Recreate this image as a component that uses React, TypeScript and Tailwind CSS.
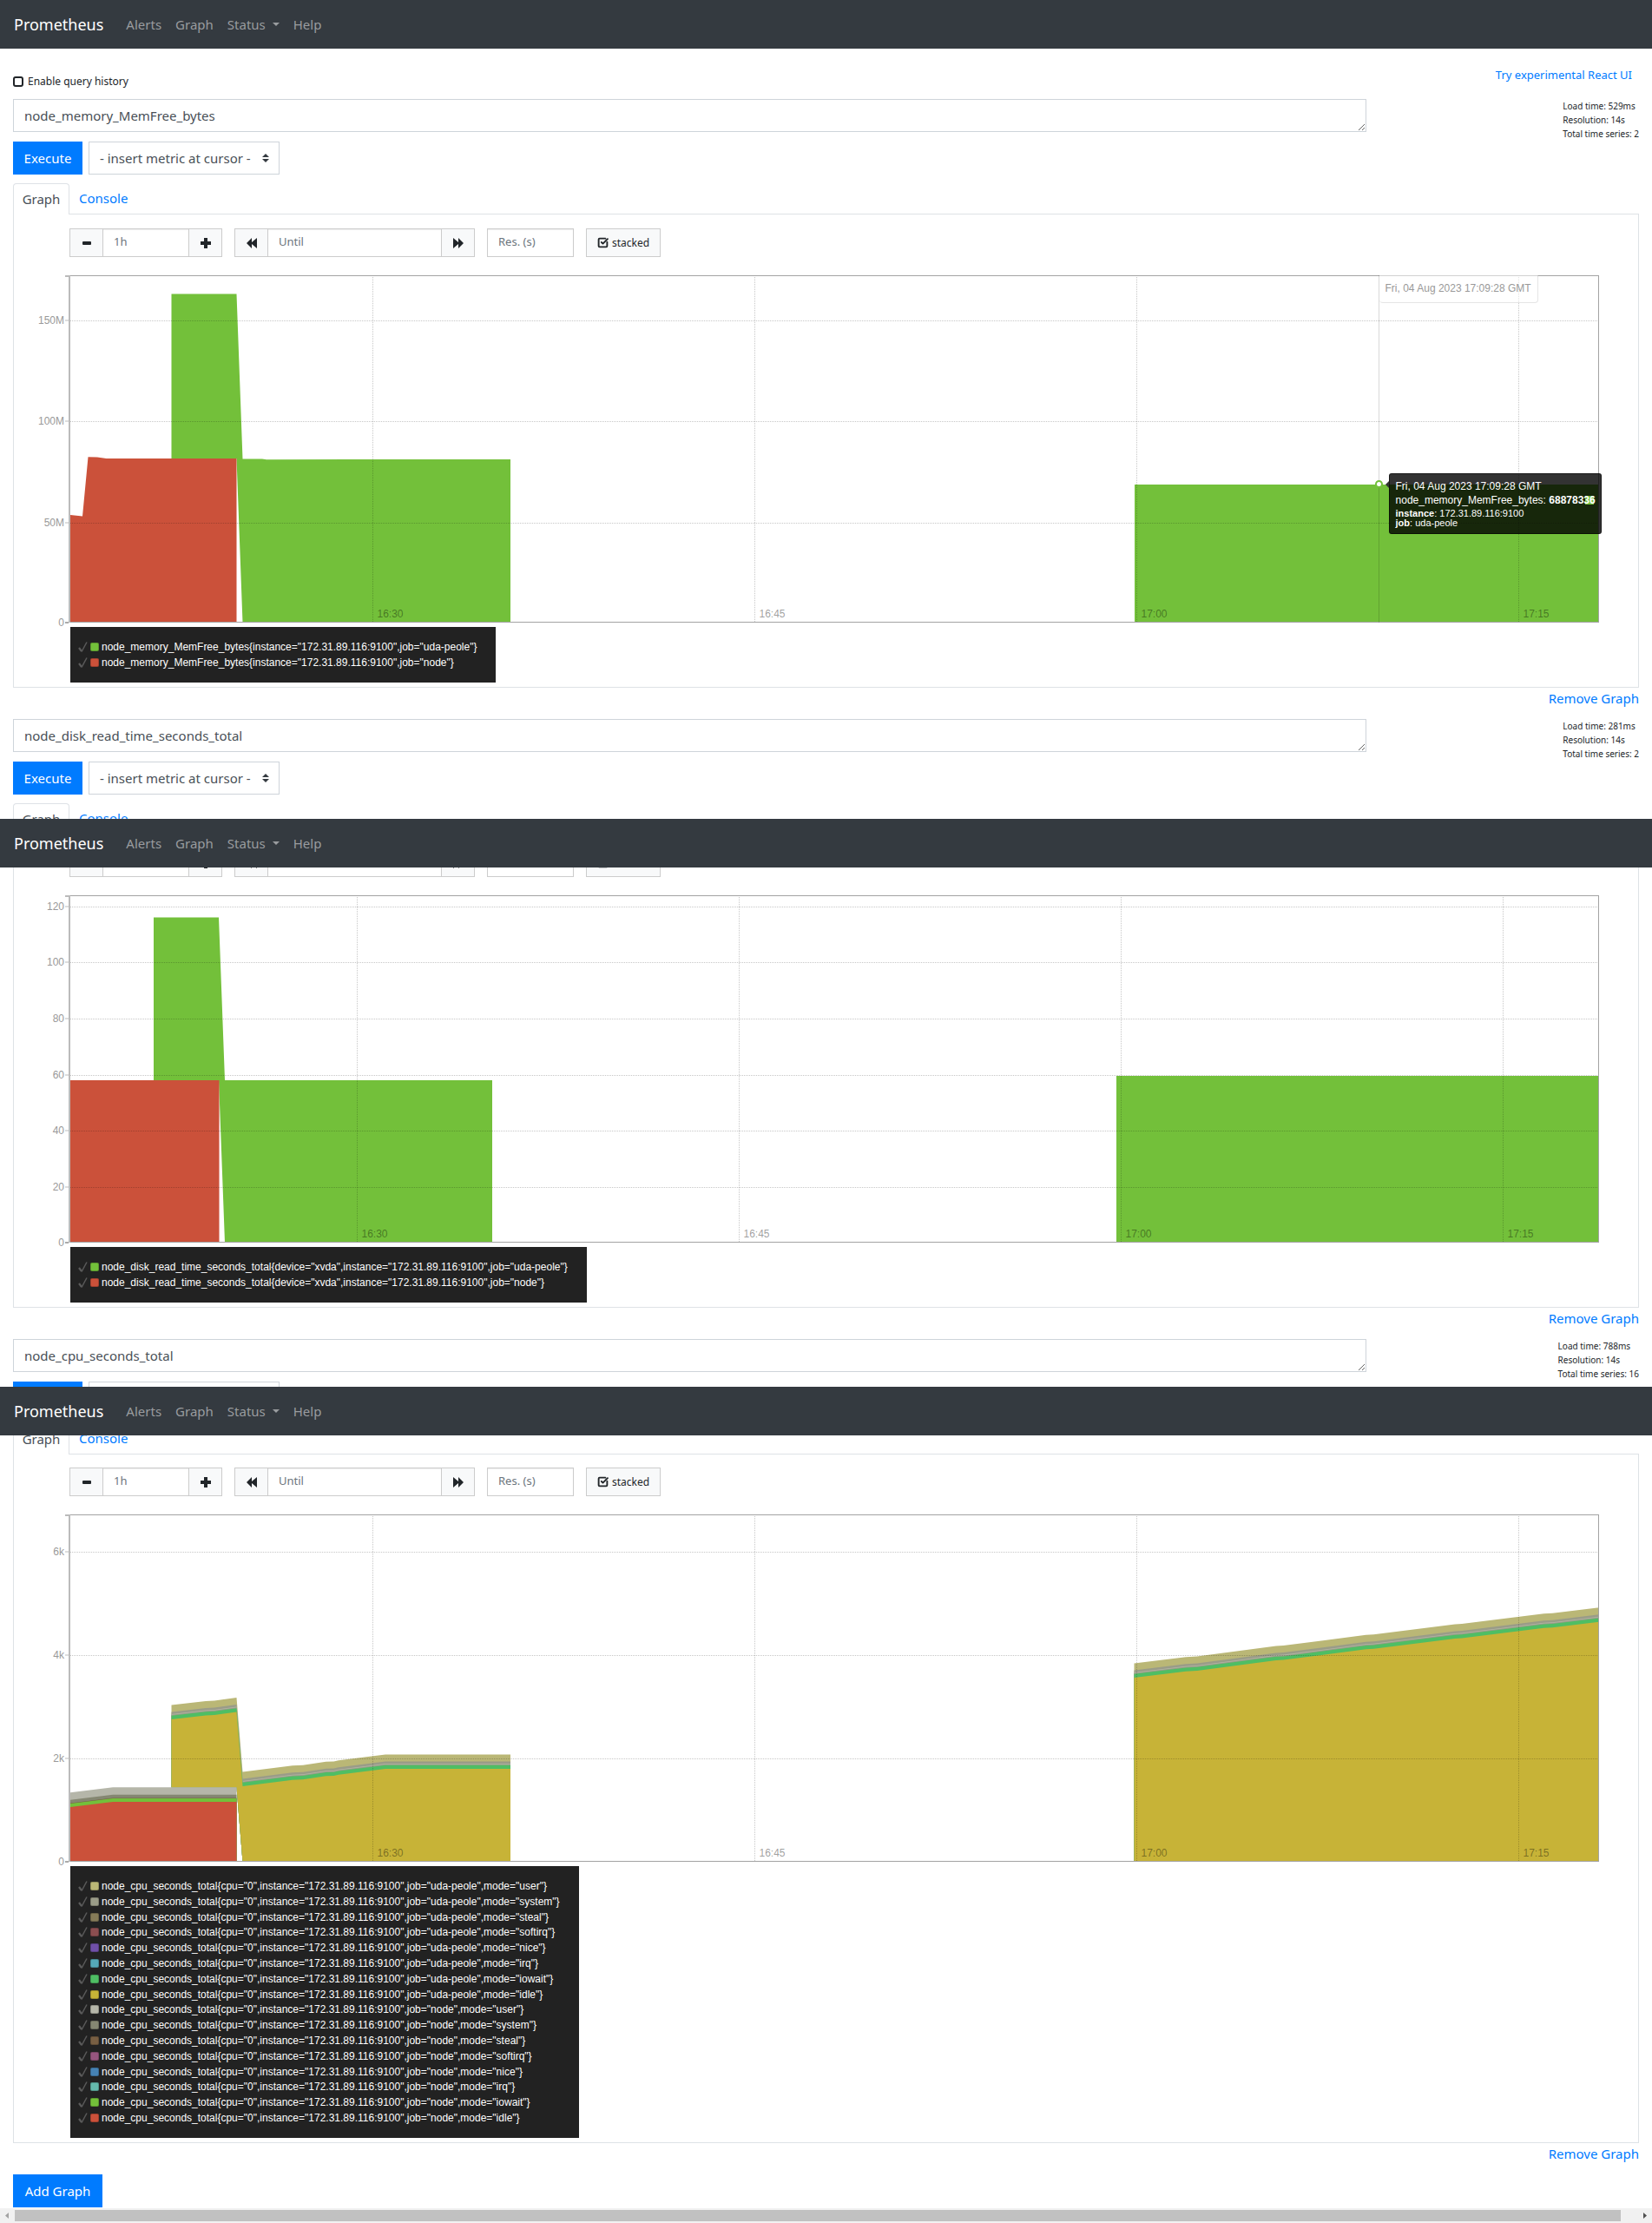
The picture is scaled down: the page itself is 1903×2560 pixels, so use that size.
import React from "react";
import { SquareCheckBig } from "lucide-react";

type Point = [number, number];
type Area = { color: string; points: Point[] };
type Tick = { label: string; at: number };
type Series = { color: string; label: string };

const PLOT_W = 1761;
const PLOT_H = 400;

const GREEN = "#73c03a";
const RED = "#cb513a";

const toPath = (pts: Point[]) => pts.map((p) => p.join(",")).join(" ");

/* ---------- chart data ---------- */

const memAreas: Area[] = [
  {
    color: GREEN,
    points: [
      [116.5, 211], [116.5, 21.5], [191.5, 21.5], [198.5, 211.5], [221, 211.5], [226, 212.3],
      [320, 212], [507, 212], [507, 400], [198.5, 400], [191.5, 211],
    ],
  },
  {
    color: RED,
    points: [
      [0, 276], [14, 277.5], [20.5, 209.2], [31, 209.5], [41.5, 211], [191.5, 211], [191.5, 400], [0, 400],
    ],
  },
  { color: GREEN, points: [[1226, 241], [1761, 241], [1761, 400], [1226, 400]] },
];

const diskAreas: Area[] = [
  {
    color: GREEN,
    points: [
      [96, 213], [96, 25.5], [171, 25.5], [178, 213], [486, 213], [486, 400], [178, 400], [171, 213],
    ],
  },
  { color: RED, points: [[0, 213], [171.5, 213], [171.5, 400], [0, 400]] },
  { color: GREEN, points: [[1205, 208], [1761, 208], [1761, 400], [1205, 400]] },
];

const udaTop: Point[][] = [
  [
    [116.5, 236], [156, 231.5], [166, 231], [191.5, 227.5], [198.5, 313], [256, 305.7], [268, 305.3],
    [294.5, 301.3], [303.5, 301], [309, 299.8], [363, 293], [507, 293],
  ],
  [
    [1225.5, 188], [1285, 180.8], [1298, 180], [1389, 168], [1397.5, 167.6], [1492.5, 155.3], [1501.5, 154.8],
    [1595, 143], [1603, 142.5], [1697.5, 130.7], [1707.5, 130.3], [1761, 123.7],
  ],
];
const udaBase: Point[][] = [
  [[507, 400], [198.5, 400], [191.5, 314.5], [116.5, 314.5]],
  [[1761, 400], [1225.5, 400]],
];
const lift = (pts: Point[], by: number): Point[] => pts.map(([x, y]) => [x, y - by]);
const nodeTop: Point[] = [[0, 337], [49, 331], [191.5, 331]];
const nodeBase: Point[] = [[191.5, 400], [0, 400]];

const udaLayers: [string, number][] = [
  ["#bab776", 16.5],
  ["#9a9c88", 8.5],
  ["#b4b6a6", 6],
  ["#9a9c88", 5.2],
  ["#4fbe64", 4.2],
  ["#c7b337", 0],
];
const nodeLayers: [string, number][] = [
  ["#b5b6a9", 16.7],
  ["#858772", 8.3],
  ["#785f43", 4.6],
  ["#73c03a", 4],
  ["#cb513a", 0],
];

const cpuAreas: Area[] = [
  ...udaTop.flatMap((top, i) =>
    udaLayers.map(([color, by]) => ({ color, points: [...lift(top, by), ...udaBase[i]] }))
  ),
  ...nodeLayers.map(([color, by]) => ({ color, points: [...lift(nodeTop, by), ...nodeBase] })),
];

const times = (first: number): Tick[] =>
  ["16:30", "16:45", "17:00", "17:15"].map((label, i) => ({ label, at: first + i * 440 }));

const memY: Tick[] = [
  { label: "150M", at: 52 },
  { label: "100M", at: 168 },
  { label: "50M", at: 285 },
  { label: "0", at: 400 },
];
const diskY: Tick[] = [
  { label: "120", at: 13 },
  { label: "100", at: 77 },
  { label: "80", at: 142 },
  { label: "60", at: 207 },
  { label: "40", at: 271 },
  { label: "20", at: 336 },
  { label: "0", at: 400 },
];
const cpuY: Tick[] = [
  { label: "6k", at: 43 },
  { label: "4k", at: 162 },
  { label: "2k", at: 281 },
  { label: "0", at: 400 },
];

const INSTANCE = 'instance="172.31.89.116:9100"';
const memSeries: Series[] = [
  { color: GREEN, label: `node_memory_MemFree_bytes{${INSTANCE},job="uda-peole"}` },
  { color: RED, label: `node_memory_MemFree_bytes{${INSTANCE},job="node"}` },
];
const diskSeries: Series[] = [
  { color: GREEN, label: `node_disk_read_time_seconds_total{device="xvda",${INSTANCE},job="uda-peole"}` },
  { color: RED, label: `node_disk_read_time_seconds_total{device="xvda",${INSTANCE},job="node"}` },
];
const modes = ["user", "system", "steal", "softirq", "nice", "irq", "iowait", "idle"];
const udaColors = ["#bab776", "#9a9c88", "#857b58", "#8b4e50", "#7050a8", "#55a9b8", "#4fbe64", "#c7b337"];
const nodeColors = ["#b5b6a9", "#858772", "#785f43", "#96557e", "#4682b4", "#65b9ac", "#73c03a", "#cb513a"];
const cpuSeries: Series[] = [
  ...modes.map((m, i) => ({
    color: udaColors[i],
    label: `node_cpu_seconds_total{cpu="0",${INSTANCE},job="uda-peole",mode="${m}"}`,
  })),
  ...modes.map((m, i) => ({
    color: nodeColors[i],
    label: `node_cpu_seconds_total{cpu="0",${INSTANCE},job="node",mode="${m}"}`,
  })),
];

/* ---------- page parts ---------- */

function Navbar() {
  return (
    <nav className="flex h-14 items-center bg-[#343a40] pl-4 text-[15px] text-[#999c9f]">
      <a href="#home" className="mr-[18px] text-[18px] text-white">Prometheus</a>
      <a href="#alerts" className="px-2">Alerts</a>
      <a href="#graph" className="px-2">Graph</a>
      <button type="button" className="flex items-center gap-2 px-2">
        Status
        <svg viewBox="0 0 8 4" className="h-1 w-2" fill="currentColor" aria-hidden="true">
          <path d="M0 0h8L4 4z" />
        </svg>
      </button>
      <a href="#help" className="px-2">Help</a>
    </nav>
  );
}

function Query({ id, expr, load, total }: { id: string; expr: string; load: string; total: number }) {
  return (
    <div className="flex h-[38px] items-start justify-between">
      <textarea
        aria-label="Expression"
        id={id}
        rows={1}
        defaultValue={expr}
        className="block h-[38px] w-[83.25%] resize-y overflow-hidden border border-[#ced4da] px-3 py-[6px] text-[15px] leading-6 text-[#495057]"
      />
      <div className="text-[10px] leading-[16px] text-[#212529]">
        <div>Load time: {load}</div>
        <div>Resolution: 14s</div>
        <div>Total time series: {total}</div>
      </div>
    </div>
  );
}

function Actions() {
  return (
    <div className="mt-[11px] flex gap-[7px]">
      <button type="button" className="h-[38px] w-20 bg-[#007bff] text-[15px] text-white">Execute</button>
      <div className="relative">
        <select
          aria-label="Insert metric at cursor"
          className="h-[38px] w-[220px] appearance-none border border-[#ced4da] bg-white pl-3 text-[15px] text-[#495057]"
        >
          <option>- insert metric at cursor -</option>
        </select>
        <svg viewBox="0 0 4 5" className="pointer-events-none absolute right-3 top-[14px] h-[10px] w-2" fill="#343a40" aria-hidden="true">
          <path d="M2 0L0 2h4zm0 5L0 3h4z" />
        </svg>
      </div>
    </div>
  );
}

function Tabs() {
  return (
    <div role="tablist" className="flex h-[36px] w-full shrink-0 border-b border-[#dee2e6] text-[15px]">
      <button
        type="button"
        role="tab"
        aria-selected="true"
        className="-mb-px w-[65px] rounded-t border border-b-0 border-[#dee2e6] bg-white text-[#495057]"
      >
        Graph
      </button>
      <button type="button" role="tab" aria-selected="false" className="px-[11px] text-[#007bff]">
        Console
      </button>
    </div>
  );
}

const iconButton =
  "flex h-[33px] w-[39px] items-center justify-center border border-[#ccc] bg-[#f8f9fa] text-[#212529]";
const field =
  "h-[33px] border border-[#ccc] bg-white px-3 pb-[3px] text-[13px] text-[#6c757d] shadow-[inset_0_1px_1px_rgba(0,0,0,0.075)] placeholder:text-[#6c757d]";

function Toolbar() {
  return (
    <div className="flex shrink-0 gap-[14px] pl-[64px]">
      <div className="flex">
        <button type="button" aria-label="Shrink range" className={iconButton}>
          <svg viewBox="0 0 12 12" className="size-3" fill="currentColor"><rect x="1" y="4" width="10" height="4" rx="1" /></svg>
        </button>
        <input aria-label="Range" placeholder="1h" className={field + " -mx-px w-[100px]"} />
        <button type="button" aria-label="Grow range" className={iconButton}>
          <svg viewBox="0 0 12 12" className="size-3" fill="currentColor">
            <path d="M4 0h4v4h4v4H8v4H4V8H0V4h4z" />
          </svg>
        </button>
      </div>
      <div className="flex">
        <button type="button" aria-label="Rewind" className={iconButton}>
          <svg viewBox="0 0 12 12" className="size-3" fill="currentColor">
            <path d="M0 6L6 0v5l6-5v12L6 7v5z" />
          </svg>
        </button>
        <input aria-label="Until" placeholder="Until" className={field + " -mx-px w-[201px]"} />
        <button type="button" aria-label="Forward" className={iconButton}>
          <svg viewBox="0 0 12 12" className="size-3" fill="currentColor">
            <path d="M12 6L6 0v5L0 0v12l6-5v5z" />
          </svg>
        </button>
      </div>
      <input aria-label="Resolution in seconds" placeholder="Res. (s)" className={field + " w-[100px]"} />
      <button
        type="button"
        className="flex h-[33px] w-[86px] items-center justify-center gap-1 border border-[#ccc] bg-[#f8f9fa] text-[12px] text-[#212529]"
      >
        <SquareCheckBig size={13} strokeWidth={3.5} />
        stacked
      </button>
    </div>
  );
}

function Chart({ areas, xs, ys, children }: { areas: Area[]; xs: Tick[]; ys: Tick[]; children?: React.ReactNode }) {
  return (
    <div className="flex pr-[45px] font-['Liberation_Sans',Arial,sans-serif] text-[12px] leading-[14px]">
      <div className="relative h-[400px] w-[65px] shrink-0 border-r-2 border-[#bbb] text-[#999]">
        {ys.map((t) => (
          <div
            key={t.label}
            className="absolute right-0 flex -translate-y-1/2 items-center gap-px"
            style={{ top: t.at }}
          >
            {t.label}
            <span className={t.label === "0" ? "h-[2px] w-1 bg-[#aaa]" : "h-[2px] w-1 bg-[#ddd]"} />
          </div>
        ))}
        <span className="absolute right-0 top-0 h-[2px] w-1 bg-[#bbb]" />
      </div>
      <div className="relative h-[400px] grow">
        <svg
          viewBox={`0 0 ${PLOT_W} ${PLOT_H}`}
          preserveAspectRatio="none"
          className="absolute inset-0 h-full w-full"
          aria-hidden="true"
        >
          {areas.map((a, i) => (
            <polygon key={i} points={toPath(a.points)} fill={a.color} />
          ))}
          <g stroke="#000" strokeOpacity="0.22" strokeDasharray="1 1" shapeRendering="crispEdges">
            {ys.filter((t) => t.label !== "0").map((t) => (
              <line key={t.label} x1="0" x2={PLOT_W} y1={t.at + 0.5} y2={t.at + 0.5} />
            ))}
            {xs.map((t) => (
              <line key={t.label} x1={t.at} x2={t.at} y1="0" y2={PLOT_H} />
            ))}
          </g>
        </svg>
        <div className="pointer-events-none absolute inset-0 border-y border-r border-[#a3a3a3]" />
        {xs.map((t) => (
          <span
            key={t.label}
            className="absolute bottom-[3px] pl-[5px] text-black/40"
            style={{ left: `${(t.at / PLOT_W) * 100}%` }}
          >
            {t.label}
          </span>
        ))}
        {children}
      </div>
    </div>
  );
}

function Hover() {
  return (
    <div className="absolute inset-y-0 left-[85.55%] border-l border-black/15">
      <div className="w-[183px] whitespace-nowrap rounded-b border border-l-0 border-t-0 border-black/10 bg-white/50 px-[7px] pb-[9px] pt-2 text-[#999]">
        Fri, 04 Aug 2023 17:09:28 GMT
      </div>
      <span className="absolute -left-[5px] top-[236px] size-[9px] rounded-full border-2 border-[#73c03a] bg-white" />
      <svg viewBox="0 0 4 8" className="absolute left-[7px] top-[237px] h-2 w-1" fill="#333" aria-hidden="true">
        <path d="M4 0v8L0 4z" />
      </svg>
      <div className="absolute left-[11px] top-[228px] h-[70px] w-[245px] whitespace-nowrap rounded-[3px] border border-black/50 bg-black/80 px-[7px] pt-[6px] text-white">
        <span className="absolute right-2 top-[25px] size-[10px] bg-[#73c03a]" />
        <div className="relative leading-[16px]">Fri, 04 Aug 2023 17:09:28 GMT</div>
        <div className="relative leading-[17px]">
          node_memory_MemFree_bytes: <b>68878336</b>
        </div>
        <div className="text-[11px] leading-[12px]">
          <b>instance</b>: 172.31.89.116:9100
        </div>
        <div className="text-[11px] leading-[11px]">
          <b>job</b>: uda-peole
        </div>
      </div>
    </div>
  );
}

function Legend({ series, tall }: { series: Series[]; tall?: boolean }) {
  return (
    <ul
      className={
        (tall ? "h-[313px]" : "h-[64px]") +
        " ml-[65px] mt-[5px] grid w-fit auto-rows-fr bg-[#222] py-[14px] pl-[9px] pr-[22px] font-['Liberation_Sans',Arial,sans-serif] text-[12px] text-white"
      }
    >
      {series.map((s) => (
        <li key={s.label} className="flex items-center">
          <svg viewBox="0 0 11 12" className="mr-[3px] h-3 w-[11px]" fill="none" stroke="#5a5a5a" aria-hidden="true">
            <path d="M1 7l3 4" strokeWidth="2.2" />
            <path d="M4 11.5L10 .5" strokeWidth="1.5" />
          </svg>
          <span
            className="mr-[3px] size-[10px] rounded-[2px] border border-black/20"
            style={{ backgroundColor: s.color }}
          />
          {s.label}
        </li>
      ))}
    </ul>
  );
}

function RemoveGraph() {
  return (
    <div className="flex h-[36px] items-start justify-end">
      <a href="#remove" className="text-[15px] leading-6 text-[#007bff]">Remove Graph</a>
    </div>
  );
}

const panel = "border-x border-b border-[#dee2e6] pb-[5px]";

export default function App() {
  return (
    <div className="min-w-0 overflow-hidden bg-white font-['Noto_Sans','Segoe_UI',sans-serif] text-[#212529]">
      <section>
        <Navbar />
        <div className="px-[15px]">
          <div className="flex h-[58px] items-start justify-between">
            <label className="mt-[29px] flex items-center gap-[5px] text-[12px] leading-[18px]">
              <input type="checkbox" className="size-3 appearance-none rounded-[3px] border-2 border-[#212529]" />
              Enable query history
            </label>
            <a href="#react-ui" className="mr-[8px] mt-[19px] text-[13px] leading-[22px] text-[#007bff]">
              Try experimental React UI
            </a>
          </div>
          <Query id="expr-memory" expr="node_memory_MemFree_bytes" load="529ms" total={2} />
          <Actions />
          <div className="mt-[10px]">
            <Tabs />
          </div>
          <div className={panel}>
            <div className="pt-4">
              <Toolbar />
            </div>
            <div className="mt-[21px]">
              <Chart areas={memAreas} xs={times(348.5)} ys={memY}>
                <Hover />
              </Chart>
            </div>
            <Legend series={memSeries} />
          </div>
          <RemoveGraph />
          <Query id="expr-disk" expr="node_disk_read_time_seconds_total" load="281ms" total={2} />
          <Actions />
          <div className="mt-[10px] h-[18px] overflow-hidden">
            <Tabs />
          </div>
        </div>
      </section>

      <section>
        <Navbar />
        <div className="px-[15px]">
          <div className={panel}>
            <div className="flex h-[11px] items-end overflow-hidden">
              <Toolbar />
            </div>
            <div className="mt-[21px]">
              <Chart areas={diskAreas} xs={times(330.5)} ys={diskY} />
            </div>
            <Legend series={diskSeries} />
          </div>
          <RemoveGraph />
          <Query id="expr-cpu" expr="node_cpu_seconds_total" load="788ms" total={16} />
          <div className="h-[17px] overflow-hidden">
            <Actions />
          </div>
        </div>
      </section>

      <section>
        <Navbar />
        <div className="px-[15px]">
          <div className="flex h-[22px] items-end overflow-hidden">
            <Tabs />
          </div>
          <div className={panel}>
            <div className="pt-[15px]">
              <Toolbar />
            </div>
            <div className="mt-[21px]">
              <Chart areas={cpuAreas} xs={times(348.5)} ys={cpuY} />
            </div>
            <Legend series={cpuSeries} tall />
          </div>
          <RemoveGraph />
          <button type="button" className="block h-[38px] w-[103px] bg-[#007bff] text-[15px] text-white">Add Graph</button>
        </div>
        <div className="mt-px flex h-[17px] items-center bg-[#f1f1f1]">
          <svg viewBox="0 0 17 17" className="size-[17px]" fill="#a3a3a3" aria-hidden="true"><path d="M10 5v7L6 8.5z" /></svg>
          <div className="mr-[19px] h-[13px] grow bg-[#c1c1c1]" />
          <svg viewBox="0 0 17 17" className="size-[17px]" fill="#505050" aria-hidden="true"><path d="M7 5v7l4-3.5z" /></svg>
        </div>
      </section>
    </div>
  );
}
